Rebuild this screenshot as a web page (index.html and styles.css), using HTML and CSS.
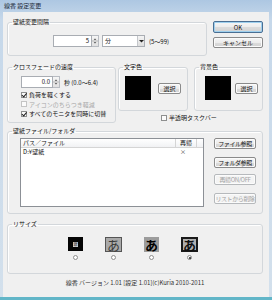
FILE: index.html
```html
<!DOCTYPE html>
<html lang="ja">
<head>
<meta charset="UTF-8">
<title>線香 設定変更</title>
<link rel="stylesheet" href="styles.css">
</head>
<body>
<div class="window">
  <div class="titlebar">線香 設定変更</div>
  <div class="client">

    <div class="row">
      <fieldset class="group g-interval">
        <legend>壁紙変更間隔</legend>
        <div class="line">
          <div class="field num w-interval">5</div>
          <div class="spin">
            <svg width="7" height="12" viewBox="0 0 7 12"><path d="M2 4.5h3L3.5 3z M2 7.5h3L3.5 9z" fill="#333"/><path d="M0 6h7" stroke="#aaa" stroke-width="1"/></svg>
          </div>
          <div class="combo">分<span class="drop"><svg width="5" height="4" viewBox="0 0 5 4"><path d="M0 1h5L2.5 3.5z" fill="#222"/></svg></span></div>
          <span class="hint">(5～99)</span>
        </div>
      </fieldset>
      <div class="dlg-buttons">
        <button class="btn btn-ok">OK</button>
        <button class="btn btn-cancel">キャンセル</button>
      </div>
    </div>

    <div class="row row-mid">
      <fieldset class="group g-fade">
        <legend>クロスフェードの速度</legend>
        <div class="line">
          <div class="field num w-fade">0.0</div>
          <div class="spin">
            <svg width="7" height="12" viewBox="0 0 7 12"><path d="M2 4.5h3L3.5 3z M2 7.5h3L3.5 9z" fill="#333"/><path d="M0 6h7" stroke="#aaa" stroke-width="1"/></svg>
          </div>
          <span class="hint">秒 (0.0～6.4)</span>
        </div>
        <div class="checks">
          <label class="check"><span class="box on"></span>負荷を軽くする</label>
          <label class="check disabled"><span class="box"></span>アイコンのちらつき軽減</label>
          <label class="check"><span class="box on"></span>すべてのモニタを同時に切替</label>
        </div>
      </fieldset>

      <div class="color-col">
        <div class="color-groups">
          <fieldset class="group g-color g-fg">
            <legend>文字色</legend>
            <div class="swatch-line">
              <div class="swatch"></div>
              <button class="btn btn-pick">選択</button>
            </div>
          </fieldset>
          <fieldset class="group g-color g-bg">
            <legend>背景色</legend>
            <div class="swatch-line">
              <div class="swatch"></div>
              <button class="btn btn-pick">選択</button>
            </div>
          </fieldset>
        </div>
        <label class="check check-taskbar"><span class="box"></span>半透明タスクバー</label>
      </div>
    </div>

    <fieldset class="group g-files">
      <legend>壁紙ファイル/フォルダ</legend>
      <div class="files">
        <div class="listbox">
          <div class="list-head">
            <span class="col-path">パス／ファイル</span>
            <span class="col-rec">再帰</span>
            <span class="col-fill"></span>
          </div>
          <div class="list-row">
            <span class="col-path">D:¥壁紙</span>
            <span class="col-rec">×</span>
          </div>
        </div>
        <div class="file-buttons">
          <button class="btn">ファイル参照</button>
          <button class="btn">フォルダ参照</button>
          <button class="btn" disabled>再帰ON/OFF</button>
          <button class="btn" disabled>リストから削除</button>
        </div>
      </div>
    </fieldset>

    <fieldset class="group g-resize">
      <legend>リサイズ</legend>
      <div class="resize-opts">
        <div class="opt">
          <span class="thumb thumb-1"><span class="mini">線</span></span>
          <span class="radio"></span>
        </div>
        <div class="opt">
          <span class="thumb thumb-2">あ</span>
          <span class="radio"></span>
        </div>
        <div class="opt">
          <span class="thumb thumb-3">あ</span>
          <span class="radio"></span>
        </div>
        <div class="opt">
          <span class="thumb thumb-4">あ</span>
          <span class="radio on"></span>
        </div>
      </div>
    </fieldset>

    <div class="footer">線香 バージョン 1.01 [設定 1.01](c)Kuria 2010-2011</div>
  </div>
</div>
</body>
</html>
```

FILE: styles.css
```css
body {
  margin: 0;
  background: #ffffff;
  font-family: "Noto Sans CJK JP", "Noto Sans", sans-serif;
  font-size: 6px;
  color: #111;
}

.window {
  width: 272px;
  height: 300px;
  box-sizing: border-box;
  background: linear-gradient(#adc7e2, #c6d8ea 20px, #d3e0ec);
  border-bottom: 3px solid #62b6c8;
  display: flex;
  flex-direction: column;
}

.titlebar {
  height: 12px;
  line-height: 12px;
  padding-left: 4px;
  color: #1b2838;
}

.client {
  flex: 1;
  margin: 0 3px 0 3px;
  background: #f0f0f0;
  padding: 6px 6px 0 4px;
  display: flex;
  flex-direction: column;
}

.row {
  display: flex;
  align-items: flex-start;
}

.row-mid {
  margin-top: 7px;
}

/* group boxes (legend sits at the left of the content box, so no side padding here) */
.group {
  margin: 0;
  min-width: 0;
  box-sizing: border-box;
  border: 1px solid #d3d7db;
  border-radius: 3px;
  box-shadow: inset 1px 1px 0 #fff;
  padding-left: 0;
  padding-right: 0;
}

.group legend {
  font-size: 6px;
  line-height: 8px;
  padding: 0 1px;
  margin-left: 4px;
}

.g-interval {
  width: 200px;
  height: 38px;
  padding-top: 9px;
}

.g-interval .line {
  margin-left: 45px;
}

.line {
  display: flex;
  align-items: center;
}

.field {
  height: 12px;
  box-sizing: border-box;
  background: #fff;
  border: 1px solid #a9adb3;
  line-height: 10px;
}

.num {
  text-align: right;
  padding-right: 2px;
}

.w-interval { width: 39px; }
.w-fade { width: 32px; }

.spin {
  width: 7px;
  height: 12px;
  box-sizing: border-box;
  border: 1px solid #b8bcc2;
  border-left: none;
  background: linear-gradient(#f6f6f6, #e1e1e1);
  display: flex;
}

.spin svg {
  margin-top: -1px;
}

.combo {
  margin-left: 3px;
  width: 43px;
  height: 12px;
  box-sizing: border-box;
  border: 1px solid #a9adb3;
  background: #fff;
  line-height: 10px;
  padding-left: 2px;
  display: flex;
  justify-content: space-between;
}

.drop {
  width: 6px;
  height: 10px;
  border-left: 1px solid #c4c7cb;
  background: linear-gradient(#f4f4f4, #dedede);
  display: flex;
  align-items: center;
  justify-content: center;
}

.hint {
  margin-left: 4px;
}

.dlg-buttons {
  margin-left: 6px;
  width: 50px;
  padding-top: 3px;
  display: flex;
  flex-direction: column;
  gap: 4px;
}

/* buttons */
.btn {
  font-family: inherit;
  font-size: 6px;
  color: #111;
  padding: 0;
  margin: 0;
  height: 11px;
  line-height: 9px;
  border: 1px solid #8a8a8a;
  border-radius: 2px;
  background: linear-gradient(#f6f6f6, #ececec 50%, #dcdcdc 51%, #d2d2d2);
  box-shadow: inset 0 0 0 1px #fbfbfb;
  white-space: nowrap;
}

.btn:disabled {
  color: #a3a3a3;
  border-color: #b6b9bc;
  background: #f4f4f4;
}

.btn-ok {
  height: 12px;
  border-color: #4a6f93;
  box-shadow: inset 0 0 0 1px #9fd0ee;
}

/* crossfade group */
.g-fade {
  width: 109px;
  height: 60px;
  padding-top: 5px;
}

.g-fade .line,
.g-fade .checks {
  margin-left: 13px;
}

.checks {
  margin-top: 2px;
  display: flex;
  flex-direction: column;
}

.check {
  height: 9.5px;
  display: flex;
  align-items: center;
  gap: 2px;
}

.check.disabled {
  color: #a8a8a8;
}

.box {
  width: 6px;
  height: 6px;
  box-sizing: border-box;
  border: 1px solid #8e8f8f;
  background: #fbfbfb;
  position: relative;
}

.check.disabled .box {
  border-color: #c4c4c4;
}

.box.on::after {
  content: "";
  position: absolute;
  left: 1px;
  top: -1px;
  width: 1.5px;
  height: 3.5px;
  border: solid #1f1f1f;
  border-width: 0 1px 1px 0;
  transform: rotate(40deg);
}

/* colour groups */
.color-col {
  margin-left: 2px;
  display: flex;
  flex-direction: column;
}

.color-groups {
  display: flex;
  gap: 6px;
}

.g-color {
  height: 48px;
  padding-top: 5px;
}

.g-fg { width: 70px; }
.g-bg { width: 69px; }

.swatch-line {
  display: flex;
  align-items: center;
  margin-left: 6px;
}

.g-bg .swatch-line {
  margin-left: 10px;
}

.swatch {
  width: 26px;
  height: 24px;
  background: #000;
}

.btn-pick {
  margin-left: 7px;
  width: 23px;
}

.g-bg .btn-pick {
  margin-left: 4px;
}

.check-taskbar {
  margin: 3px 0 0 43px;
  height: 7px;
}

/* files group */
.g-files {
  margin-top: 4px;
  width: 256px;
  height: 87px;
  padding-top: 3px;
}

.files {
  display: flex;
  align-items: flex-start;
  margin-left: 12px;
}

.listbox {
  width: 184px;
  height: 69px;
  box-sizing: border-box;
  border: 1px solid #8c9096;
  background: #fff;
}

.list-head {
  display: flex;
  height: 8px;
  line-height: 7px;
  background: linear-gradient(#ffffff, #f1f2f4);
  border-bottom: 1px solid #d5d5d5;
}

.list-head span {
  box-sizing: border-box;
  border-right: 1px solid #d5d5d5;
}

.col-path {
  width: 155px;
  padding-left: 2px;
  box-sizing: border-box;
}

.col-rec {
  width: 21px;
  text-align: center;
}

.col-fill {
  flex: 1;
  border-right: none !important;
}

.list-row {
  display: flex;
  height: 8px;
  line-height: 8px;
}

.list-row .col-rec {
  color: #444;
  text-align: left;
  padding-left: 4px;
}

.file-buttons {
  margin-left: 10px;
  width: 42px;
  display: flex;
  flex-direction: column;
}

.file-buttons .btn {
  letter-spacing: -0.4px;
}

.file-buttons .btn:nth-child(2) { margin-top: 8px; }
.file-buttons .btn:nth-child(3) { margin-top: 6px; }
.file-buttons .btn:nth-child(4) { margin-top: 8px; }

/* resize group */
.g-resize {
  margin-top: 6px;
  width: 256px;
  height: 54px;
  padding-top: 9px;
}

.resize-opts {
  display: flex;
  justify-content: center;
  margin-right: 5px;
}

.opt {
  width: 38px;
  display: flex;
  flex-direction: column;
  align-items: center;
  gap: 3px;
}

.thumb {
  height: 15px;
  box-sizing: border-box;
  display: flex;
  align-items: center;
  justify-content: center;
  font-size: 13px;
  line-height: 13px;
  font-weight: bold;
}

.thumb-1 {
  width: 15px;
  height: 14px;
  margin-bottom: 1px;
  background: #050505;
}

.mini {
  font-size: 4px;
  line-height: 5px;
  font-weight: normal;
  color: #222;
  background: #cfcfcf;
  padding: 0 0.5px;
}

.thumb-2 {
  width: 17px;
  border: 1px solid #555;
  background: #a9a9a9;
  color: #3a3a3a;
  font-weight: normal;
}

.thumb-3 {
  width: 15px;
  background: #9c9c9c;
  color: #000;
}

.thumb-4 {
  width: 17px;
  border: 2px solid #1a1a1a;
  background: #b0b0b0;
  color: #111;
}

.radio {
  width: 5px;
  height: 5px;
  box-sizing: border-box;
  border: 1px solid #8e8f8f;
  border-radius: 50%;
  background: #fff;
  position: relative;
}

.radio.on::after {
  content: "";
  position: absolute;
  left: 0.5px;
  top: 0.5px;
  width: 2px;
  height: 2px;
  border-radius: 50%;
  background: #222;
}

.footer {
  margin-top: 5px;
  text-align: center;
  line-height: 8px;
  color: #333;
}
```
